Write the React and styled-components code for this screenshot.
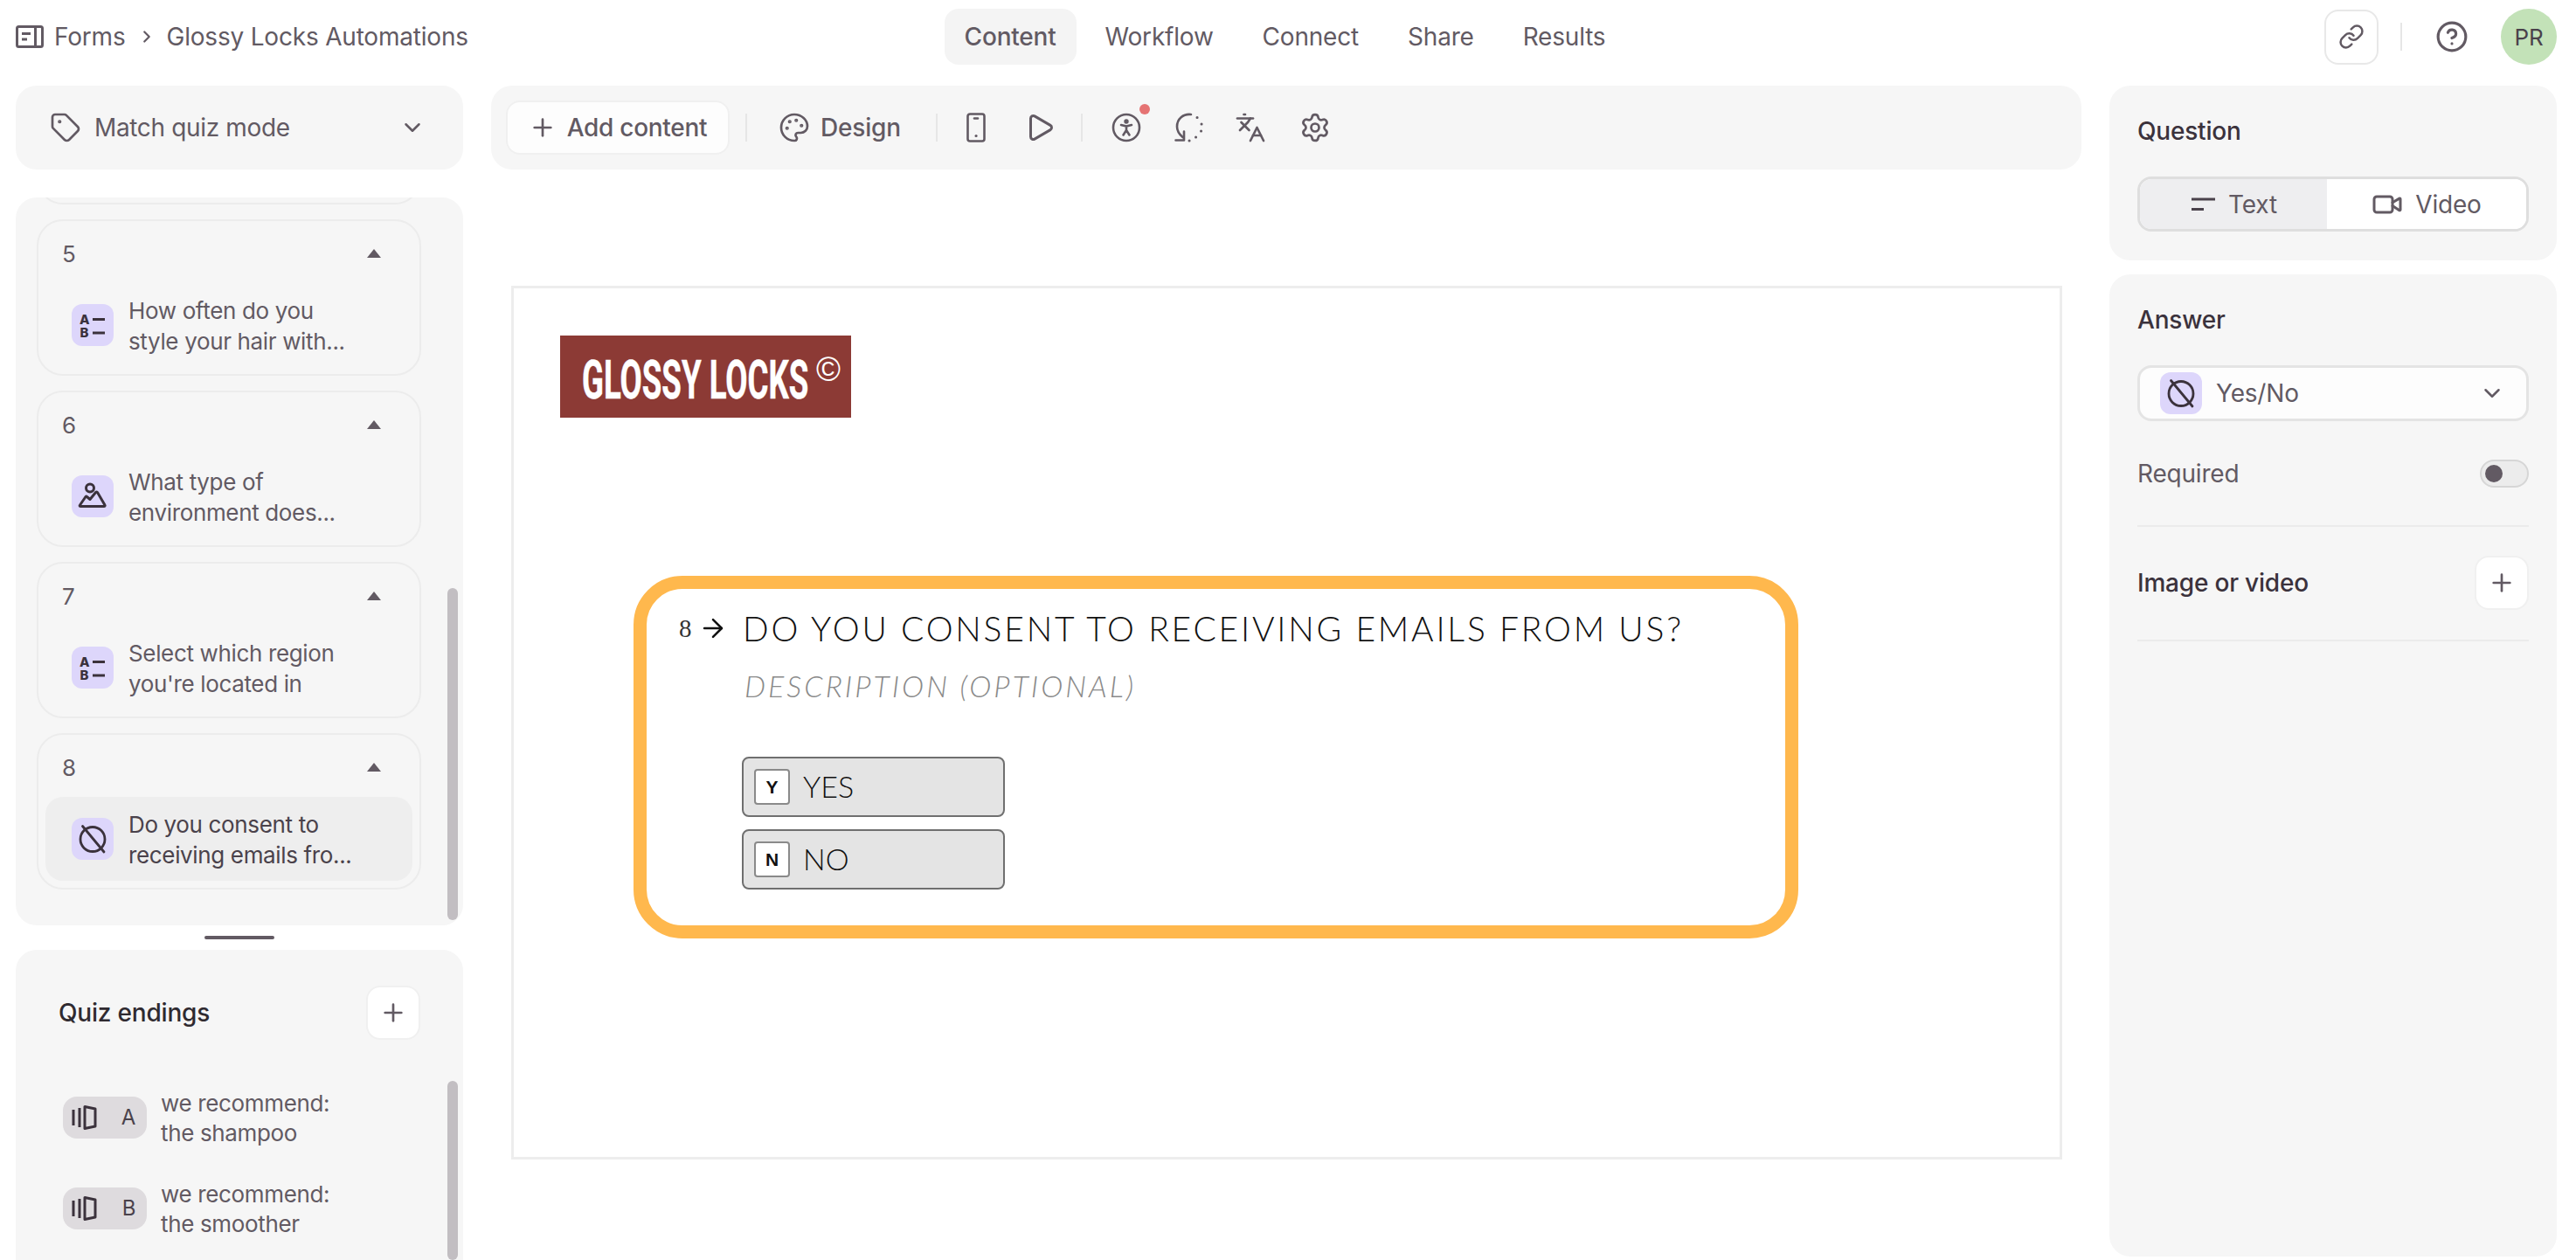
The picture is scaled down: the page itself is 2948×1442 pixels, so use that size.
import React from "react";
import styled, { createGlobalStyle } from "styled-components";
import { Tag, ChevronDown, ChevronRight, Plus, Palette, Play, Languages, Settings, Link, CircleHelp, Video, ArrowRight } from "lucide-react";

const Global = createGlobalStyle`
  * { box-sizing: border-box; }
  html, body { margin: 0; padding: 0; background: #fff; }
  body { font-family: Inter, "Liberation Sans", sans-serif; color: #625a63; overflow: hidden; letter-spacing: -.2px; }
`;

const Page = styled.div`
  width: 2948px; height: 1442px; display: flex; flex-direction: column; overflow: hidden;
`;
const TopBar = styled.header`
  height: 98px; flex: none; display: grid; grid-template-columns: 1fr auto 1fr; padding: 10px 22px 0 18px; align-items: start;
`;
const Crumbs = styled.div`
  height: 64px; display: flex; align-items: center; font-size: 28px; color: #625a63;
  svg.lead { margin-right: 12px; }
  svg.sep { margin: 0 12px 0 13px; }
`;
const Tabs = styled.nav`display: flex; gap: 10px; margin-right: 3px;`;
const Tab = styled.div`
  height: 64px; padding: 0 23px; display: flex; align-items: center; font-size: 28px; border-radius: 16px;
  background: ${p => (p.$active ? "#f4f4f4" : "transparent")};
  font-weight: ${p => (p.$active ? 500 : 400)};
`;
const TopRight = styled.div`display: flex; justify-content: flex-end; align-items: center; height: 64px;`;
const LinkBtn = styled.div`
  width: 62px; height: 63px; border: 2px solid #e8e8e8; border-radius: 16px; display: flex; align-items: center; justify-content: center;
`;
const VSep = styled.div`width: 2px; height: ${p => p.$h || 32}px; background: #e6e6e6; margin: ${p => p.$m || "0 38px 0 25px"}; flex: none;`;
const Avatar = styled.div`
  width: 64px; height: 64px; border-radius: 50%; background: #c3e2b8; color: #4a424b; display: flex; align-items: center; justify-content: center; font-size: 26px; margin-left: 37px;
`;
const Body = styled.div`
  flex: 1; min-height: 0; display: grid; grid-template-columns: 512px 1fr 512px; gap: 32px; padding: 0 22px 0 18px;
`;
const Column = styled.div`display: flex; flex-direction: column; min-height: 0;`;
const ModePanel = styled.div`
  height: 96px; flex: none; border-radius: 24px; background: #f6f6f6; display: flex; align-items: center; padding: 0 43px 0 39px; font-size: 28px; letter-spacing: -.35px;
  span { margin-left: 15px; flex: 1; }
`;
const ListPanel = styled.div`
  position: relative; margin-top: 32px; height: 833px; flex: none; border-radius: 24px; background: #f6f6f6; overflow: hidden; padding: 0 48px 0 24px;
`;
const Bar = styled.div`
  position: absolute; right: 6px; width: 12px; border-radius: 6px; background: #c2bec2; top: ${p => p.$top}px;
  bottom: ${p => p.$bottom}px;
`;
const Card = styled.section`
  border: 2px solid #ececec; border-radius: 30px; height: 179px; margin-bottom: 17px; padding: 0 8px;
  margin-top: ${p => p.$mt || 0}px;
`;
const CardHead = styled.div`
  height: 71px; display: flex; align-items: center; justify-content: space-between; padding: 3px 36px 0 19px; font-size: 26px; color: #625a63;
`;
const Caret = styled.i`
  width: 0; height: 0; display: block; border-left: 8px solid transparent; border-right: 8px solid transparent; border-bottom: 10px solid #625a63; 
`;
const QRow = styled.div`
  height: 96px; border-radius: 20px; display: flex; align-items: center; gap: 17px; padding-left: 30px;
  background: ${p => (p.$sel ? "#eeeeee" : "transparent")};
  color: ${p => (p.$sel ? "#4a424b" : "#625a63")};
  font-size: 26px; line-height: 35px; white-space: pre-line; letter-spacing: -.35px;
  div + div { padding-top: 2px; }
`;
const TypeIcon = styled.div`
  width: 48px; height: 48px; flex: none; border-radius: 12px; background: #ddd6fb; display: flex; align-items: center; justify-content: center;
`;
const Handle = styled.div`
  width: 80px; height: 4px; border-radius: 2px; background: #625a63; margin: 12px 0 12px 216px; flex: none;
`;
const EndPanel = styled.div`
  position: relative; flex: 1; min-height: 0; border-radius: 24px 24px 0 0; background: #f6f6f6; overflow: hidden; padding: 41px 49px 0 49px;
`;
const EndHead = styled.div`
  display: flex; justify-content: space-between; align-items: center; font-size: 28px; font-weight: 500; color: #2f2a30; margin-bottom: 65px;
`;
const PlusBtn = styled.div`
  width: 62px; height: 62px; border-radius: 16px; background: #fff; border: 2px solid #f0f0f0; display: flex; align-items: center; justify-content: center; flex: none;
`;
const EndRow = styled.div`
  display: flex; align-items: center; gap: 16px; margin-left: 5px; height: 48px; margin-bottom: 56px; font-size: 26px; line-height: 34px; white-space: pre-line; letter-spacing: -.35px;
  div + div { padding-top: 2px; }
`;
const EndBadge = styled.div`
  width: 96px; height: 48px; flex: none; border-radius: 16px; background: #dedbde; display: flex; align-items: center; justify-content: space-between; padding: 0 13px 0 10px; color: #4a424b; font-size: 24px;
`;
const ToolBar = styled.div`
  height: 96px; border-radius: 24px; background: #f6f6f6; display: flex; align-items: center; padding-left: 17px; flex: none;
`;
const AddBtn = styled.div`
  width: 256px; height: 62px; border-radius: 16px; background: #fdfdfd; border: 2px solid #f0f0f0; display: flex; align-items: center; justify-content: center; gap: 12px; font-size: 28px; font-weight: 500; letter-spacing: -.3px;
`;
const DesignBtn = styled.div`display: flex; align-items: center; gap: 12px; font-size: 28px; font-weight: 500;`;
const IconSlot = styled.div`
  position: relative; width: 36px; height: 36px; display: flex; align-items: center; justify-content: center; margin-right: ${p => p.$mr || 0}px; flex: none;
`;
const Dot = styled.i`
  position: absolute; top: -9px; right: -9px; width: 12px; height: 12px; border-radius: 50%; background: #e57373;
`;
const Canvas = styled.div`
  margin: 133px 22px 0 23px; height: 1000px; border: 3px solid #ededed; background: #fff; padding: 54px 0 0 53px; flex: none;
`;
const Logo = styled.div`
  position: relative; width: 333px; height: 94px; background: #8c3a35; color: #fff; overflow: hidden; letter-spacing: 0;
`;
const LogoText = styled.span`
  position: absolute; left: 25px; top: 18px; font-family: Roboto, "Liberation Sans", sans-serif; font-weight: 700; font-size: 61px; line-height: 66px; white-space: nowrap; transform: scaleX(.6); transform-origin: left top; -webkit-text-stroke: .5px #fff;
`;
const LogoMark = styled.span`
  position: absolute; left: 293px; top: 17px; font-family: "Liberation Sans", sans-serif; font-size: 38px; line-height: 44px;
`;
const QBox = styled.div`
  margin: 181px 0 0 84px; width: 1333px; height: 415px; border: 15px solid #ffb84d; border-radius: 56px; padding: 25px 0 0 37px; color: #111; position: relative;
`;
const QHead = styled.div`display: flex; align-items: center; height: 40px;`;
const QNum = styled.span`
  font-family: "Liberation Serif", serif; font-size: 29px; width: 22px; color: #333;
`;
const Title = styled.div`
  font-family: Lato, sans-serif; font-weight: 300; font-size: 39px; letter-spacing: 2.8px; white-space: nowrap; margin-left: 17px; line-height: 40px;
`;
const Desc = styled.div`
  font-family: Lato, sans-serif; font-weight: 300; font-style: italic; font-size: 34px; letter-spacing: 3px; color: #8a8a8a; margin: 26px 0 0 75px; line-height: 40px; white-space: nowrap;
`;
const Options = styled.div`display: flex; flex-direction: column; gap: 14px; margin: 61px 0 0 72px;`;
const Option = styled.div`
  width: 301px; height: 69px; background: #e4e4e4; border: 2px solid #6f6f6f; border-radius: 8px; display: flex; align-items: center; padding-left: 12px; gap: 15px;
  font-family: Lato, sans-serif; font-weight: 300; font-size: 34px; letter-spacing: 0; color: #111;
  span { margin-top: -3px; }
`;
const Key = styled.div`
  width: 41px; height: 41px; background: #fff; border: 2px solid #8a8a8a; border-radius: 4px; display: flex; align-items: center; justify-content: center;
  font-family: "Liberation Sans", sans-serif; font-weight: 700; font-size: 21px;
`;
const SidePanel = styled.div`
  background: #f6f6f6; border-radius: 24px; padding: ${p => p.$pad}; flex: ${p => p.$grow ? "1" : "none"}; height: ${p => p.$h || "auto"}; margin: ${p => p.$m || 0};
`;
const SideTitle = styled.div`font-size: 28px; font-weight: 500; color: #3b323c; line-height: 34px;`;
const Segment = styled.div`
  display: grid; grid-template-columns: 214px 1fr; height: 63px; margin-top: 35px; border: 3px solid #dedede; border-radius: 16px; overflow: hidden; background: #fff;
`;
const Seg = styled.div`
  display: flex; align-items: center; justify-content: center; gap: 14px; font-size: 28px; background: ${p => (p.$on ? "#eeeef0" : "#fff")};
`;
const SelectBox = styled.div`
  height: 64px; margin-top: 35px; border: 3px solid #e4e4e4; border-radius: 16px; background: #fdfdfd; display: flex; align-items: center; padding: 0 24px 0 23px; gap: 16px; font-size: 28px;
  span { flex: 1; }
`;
const ReqRow = styled.div`
  display: flex; justify-content: space-between; align-items: center; height: 32px; margin-top: 44px; font-size: 28px;
`;
const Switch = styled.div`
  width: 56px; height: 32px; border-radius: 16px; background: #ececec; border: 2px solid #d6d6d6; display: flex; align-items: center; padding-left: 4px;
  i { display: block; width: 20px; height: 20px; border-radius: 50%; background: #625a63; }
`;
const Divider = styled.div`height: 2px; background: #ebebeb; margin-top: ${p => p.$mt}px;`;
const MediaRow = styled.div`
  display: flex; justify-content: space-between; align-items: center; margin-top: 33px; font-size: 28px; font-weight: 500; color: #3b323c;
`;

const dark = "#3b323c";
const YesNoIcon = ({ size = 36 }) => (
  <svg width={size} height={size} viewBox="0 0 36 36" fill="none" stroke={dark} strokeWidth="2.8" strokeLinecap="round">
    <circle cx="18" cy="18.500" r="14" />
    <path d="M6.500 3.500 31 33" />
  </svg>
);
const ABIcon = () => (
  <svg width="32" height="38" viewBox="0 -3 32 38">
    <text x="1" y="15" fontFamily="Inter, sans-serif" fontWeight="800" fontSize="15" fill={dark}>A</text>
    <text x="1.500" y="30" fontFamily="Inter, sans-serif" fontWeight="800" fontSize="15" fill={dark}>B</text>
    <path d="M16 9.500h14M16 25h14" stroke={dark} strokeWidth="3" />
  </svg>
);
const ImageIcon = () => (
  <svg width="34" height="34" viewBox="0 0 34 34" fill="none" stroke={dark} strokeWidth="3" strokeLinejoin="round" strokeLinecap="round">
    <circle cx="14" cy="7.500" r="4.500" />
    <path d="M3 28.500c-1 0-1-1-.5-1.500L9 17.500c.5-.5 1-.5 1.500 0l3.500 3 6.500-8c.5-.5 1.500-.5 2 0L31 27c.5.7 0 1.500-1 1.500z" />
  </svg>
);
const EndIcon = () => (
  <svg width="30" height="30" viewBox="0 0 30 30" fill="none" stroke={dark} strokeWidth="3" strokeLinejoin="round">
    <path d="M2 6v18M9 4v22" />
    <path d="M15 2.500 27 5v20l-12 2.500z" />
  </svg>
);
const FormsIcon = () => (
  <svg className="lead" width="32" height="26" viewBox="0 0 32 26" fill="none" stroke="#625a63" strokeWidth="3" strokeLinejoin="round">
    <rect x="1.500" y="1.500" width="29" height="23" rx="2" />
    <path d="M22.500 1.500v23M7 9.500h10M7 16h6" />
  </svg>
);
const PhoneIcon = () => (
  <svg width="30" height="34" viewBox="0 0 30 34" fill="none" stroke="#625a63" strokeWidth="2.600" strokeLinecap="round">
    <rect x="5.500" y="1.500" width="19" height="31" rx="2.500" />
    <path d="M13 6.500h4" />
    <path d="M15 26.500h.1" strokeWidth="3" />
  </svg>
);
const AccessIcon = () => (
  <svg width="34" height="34" viewBox="0 0 34 34" fill="none" stroke="#625a63" strokeWidth="2.600" strokeLinecap="round" strokeLinejoin="round">
    <circle cx="17" cy="17" r="15" />
    <circle cx="17" cy="10" r="1.400" fill="#625a63" />
    <path d="M11 14l6 1.500 6-1.500M17 15.500V20M17 20l-3.500 5.500M17 20l3.500 5.500" />
  </svg>
);
const RestoreIcon = () => (
  <svg width="36" height="36" viewBox="0 0 36 36" fill="none" stroke="#625a63" strokeWidth="2.600" strokeLinecap="round" strokeLinejoin="round">
    <path d="M20 3C11 2 4 8 4 17c0 5 3 9 6.500 12" />
    <path d="M12 22.500 12 32.500 2.500 32.500" />
    <path d="M27 6.500h.1M32 14h.1M31.500 22h.1M25.500 29h.1M18 33h.1" strokeWidth="3" />
  </svg>
);
const LinesIcon = () => (
  <svg width="30" height="20" viewBox="0 0 30 20" fill="none" stroke="#4a424b" strokeWidth="3.200">
    <path d="M2 4h27M2 15.500h14" />
  </svg>
);

const questions = [
  { n: 5, icon: <ABIcon />, text: "How often do you\nstyle your hair with..." },
  { n: 6, icon: <ImageIcon />, text: "What type of\nenvironment does..." },
  { n: 7, icon: <ABIcon />, text: "Select which region\nyou're located in" },
  { n: 8, icon: <YesNoIcon />, text: "Do you consent to\nreceiving emails fro...", sel: true },
];
const tabs = ["Content", "Workflow", "Connect", "Share", "Results"];
const endings = [
  { l: "A", t: "we recommend:\nthe shampoo" },
  { l: "B", t: "we recommend:\nthe smoother" },
];
const ic = { color: "#625a63", strokeWidth: 2 };

export default function App() {
  return (
    <Page>
      <Global />
      <TopBar>
        <Crumbs>
          <FormsIcon />
          Forms
          <ChevronRight className="sep" size={22} {...ic} strokeWidth={2.4} />
          Glossy Locks Automations
        </Crumbs>
        <Tabs>
          {tabs.map((t, i) => <Tab key={t} $active={i === 0}>{t}</Tab>)}
        </Tabs>
        <TopRight>
          <LinkBtn><Link size={30} {...ic} /></LinkBtn>
          <VSep />
          <CircleHelp size={38} {...ic} />
          <Avatar>PR</Avatar>
        </TopRight>
      </TopBar>
      <Body>
        <Column>
          <ModePanel>
            <Tag size={36} {...ic} strokeWidth={1.8} />
            <span>Match quiz mode</span>
            <ChevronDown size={30} {...ic} />
          </ModePanel>
          <ListPanel>
            <Card $mt={-171} />
            {questions.map(q => (
              <Card key={q.n}>
                <CardHead>{q.n}<Caret /></CardHead>
                <QRow $sel={q.sel}>
                  <TypeIcon>{q.icon}</TypeIcon>
                  <div>{q.text}</div>
                </QRow>
              </Card>
            ))}
            <Bar $top={447} $bottom={6} />
          </ListPanel>
          <Handle />
          <EndPanel>
            <EndHead>
              Quiz endings
              <PlusBtn><Plus size={32} {...ic} /></PlusBtn>
            </EndHead>
            {endings.map(e => (
              <EndRow key={e.l}>
                <EndBadge><EndIcon />{e.l}</EndBadge>
                <div>{e.t}</div>
              </EndRow>
            ))}
            <Bar $top={150} $bottom={0} />
          </EndPanel>
        </Column>
        <Column>
          <ToolBar>
            <AddBtn><Plus size={32} {...ic} />Add content</AddBtn>
            <VSep $h={32} $m="0 36px 0 18px" />
            <DesignBtn><IconSlot><Palette size={38} {...ic} strokeWidth={1.8} /></IconSlot>Design</DesignBtn>
            <VSep $h={32} $m="0 26px 0 40px" />
            <IconSlot $mr={37}><PhoneIcon /></IconSlot>
            <IconSlot><Play size={36} {...ic} /></IconSlot>
            <VSep $h={32} $m="0 32px 0 29px" />
            <IconSlot $mr={36}><AccessIcon /><Dot /></IconSlot>
            <IconSlot $mr={34}><RestoreIcon /></IconSlot>
            <IconSlot $mr={38}><Languages size={38} {...ic} strokeWidth={1.8} /></IconSlot>
            <IconSlot><Settings size={38} {...ic} strokeWidth={1.8} /></IconSlot>
          </ToolBar>
          <Canvas>
            <Logo>
              <LogoText>GLOSSY LOCKS</LogoText>
              <LogoMark>©</LogoMark>
            </Logo>
            <QBox>
              <QHead>
                <QNum>8</QNum>
                <ArrowRight size={34} color="#111" strokeWidth={1.8} />
                <Title>DO YOU CONSENT TO RECEIVING EMAILS FROM US?</Title>
              </QHead>
              <Desc>DESCRIPTION (OPTIONAL)</Desc>
              <Options>
                <Option><Key>Y</Key><span>YES</span></Option>
                <Option><Key>N</Key><span>NO</span></Option>
              </Options>
            </QBox>
          </Canvas>
        </Column>
        <Column>
          <SidePanel $pad="35px 32px 0 32px" $h="200px">
            <SideTitle>Question</SideTitle>
            <Segment>
              <Seg $on><LinesIcon />Text</Seg>
              <Seg><Video size={36} {...ic} />Video</Seg>
            </Segment>
          </SidePanel>
          <SidePanel $pad="35px 32px 0 32px" $grow $m="16px 0 4px 0">
            <SideTitle>Answer</SideTitle>
            <SelectBox>
              <TypeIcon><YesNoIcon /></TypeIcon>
              <span>Yes/No</span>
              <ChevronDown size={30} {...ic} />
            </SelectBox>
            <ReqRow>Required<Switch><i /></Switch></ReqRow>
            <Divider $mt={43} />
            <MediaRow>Image or video<PlusBtn><Plus size={32} {...ic} /></PlusBtn></MediaRow>
            <Divider $mt={34} />
          </SidePanel>
        </Column>
      </Body>
    </Page>
  );
}
